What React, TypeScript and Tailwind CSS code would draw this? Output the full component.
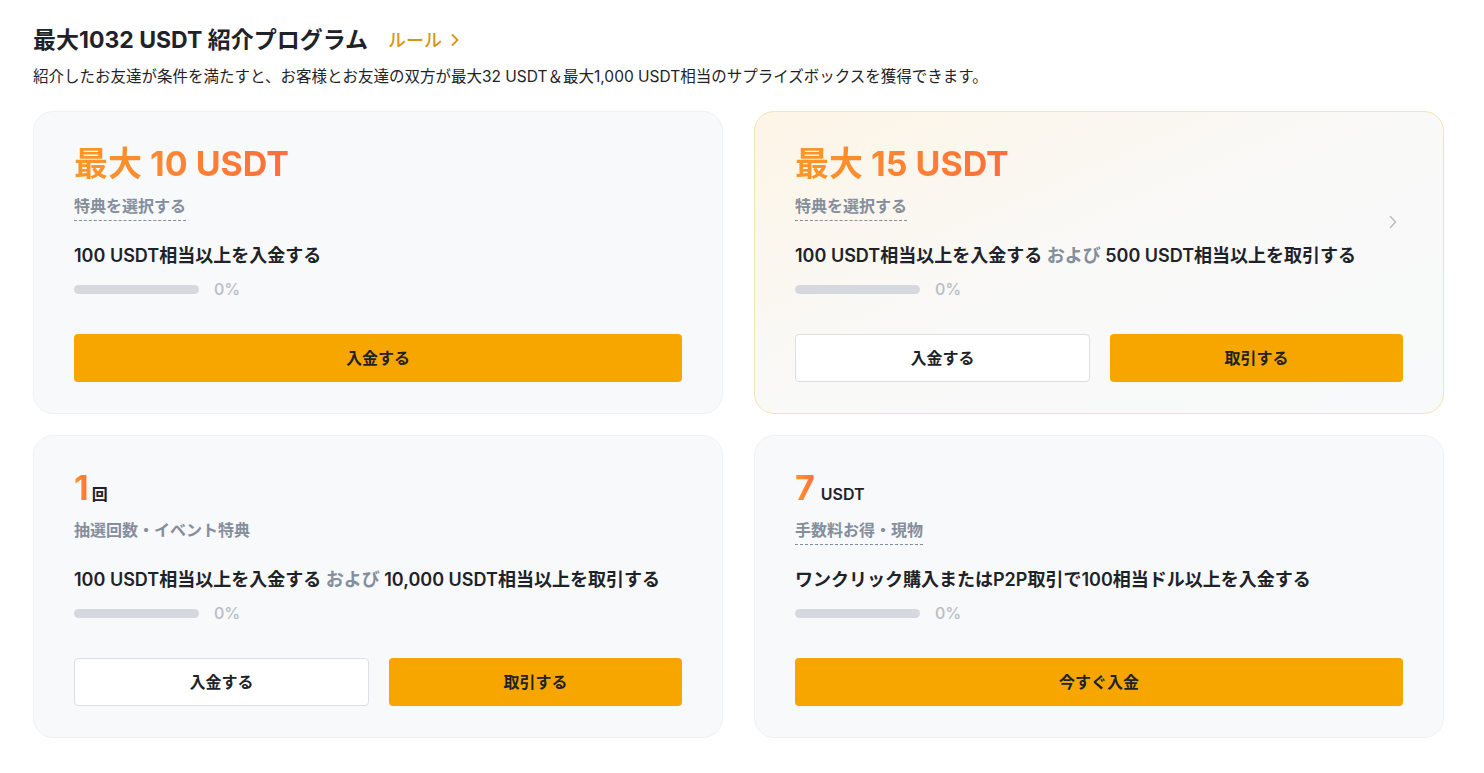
import React from "react";

const font = { fontFamily: 'Inter, "Noto Sans CJK JP", sans-serif' };

function Progress() {
  return (
    <div className="mt-[10px] flex h-[20px] items-center gap-[15px]">
      <div className="h-[9px] w-[125px] rounded-full bg-[#d5d9df]" />
      <span className="text-[16px] font-medium text-[#b7bdc6]">0%</span>
    </div>
  );
}

function Yellow({ children }: { children: React.ReactNode }) {
  return (
    <button className="flex h-[48px] flex-1 items-center justify-center rounded-[4px] bg-[#f7a600] text-[16px] font-bold text-[#1e2329]">
      {children}
    </button>
  );
}

function White({ children }: { children: React.ReactNode }) {
  return (
    <button className="flex h-[48px] flex-1 items-center justify-center rounded-[4px] border border-[#dcdfe4] bg-white text-[16px] font-bold text-[#1e2329]">
      {children}
    </button>
  );
}

function Heading({ children }: { children: React.ReactNode }) {
  return (
    <div className="h-[40px] text-[34px] font-bold leading-[40px]">
      <span className="bg-gradient-to-r from-[#fb9726] to-[#ff6d3b] bg-clip-text text-transparent">
        {children}
      </span>
    </div>
  );
}

function Sub({ children, dashed = true }: { children: React.ReactNode; dashed?: boolean }) {
  return (
    <div className="mt-[11px] flex h-[26px]">
      <span
        className={
          "h-[26px] text-[16px] font-semibold leading-[22px] text-[#848e9c] " +
          (dashed ? "border-b border-dashed border-[#848e9c]" : "")
        }
      >
        {children}
      </span>
    </div>
  );
}

function Cond({ children }: { children: React.ReactNode }) {
  return <div className="mt-[22px] text-[18px] font-semibold leading-[26px] text-[#1e2329]">{children}</div>;
}

const cardBase = "relative rounded-[20px] px-[40px] pt-[32px] pb-[31px]";

export default function App() {
  return (
    <div style={font} className="min-h-screen bg-white pl-[33px] pr-[40px] pt-[24px] text-[#1e2329]">
      <div className="flex items-center">
        <h1 className="text-[23px] font-bold leading-[32px]">最大1032 USDT 紹介プログラム</h1>
        <a className="ml-[20px] flex items-center gap-[8px] text-[18px] font-medium text-[#d89614]">
          ルール
          <svg width="10" height="14" viewBox="0 0 10 14" fill="none">
            <path d="M2.5 2l5 5-5 5" stroke="#d89614" strokeWidth="1.8" strokeLinecap="round" strokeLinejoin="round" />
          </svg>
        </a>
      </div>
      <p className="mt-[10px] text-[15.5px] leading-[22px] text-[#1e2329]">
        紹介したお友達が条件を満たすと、お客様とお友達の双方が最大32 USDT＆最大1,000 USDT相当のサプライズボックスを獲得できます。
      </p>

      <div className="mt-[23px] grid grid-cols-2 gap-x-[31px] gap-y-[21px]">
        <div className={cardBase + " border border-[#eff1f3] bg-[#f8f9fa]"}>
          <Heading>最大 10 USDT</Heading>
          <Sub>特典を選択する</Sub>
          <Cond>100 USDT相当以上を入金する</Cond>
          <Progress />
          <div className="mt-[35px] flex gap-[20px]">
            <Yellow>入金する</Yellow>
          </div>
        </div>

        <div className={cardBase + " border border-[#f5e3b8] bg-gradient-to-br from-[#fdf5e6] via-[#f9f9f8] to-[#f8f9fa]"}>
          <Heading>最大 15 USDT</Heading>
          <Sub>特典を選択する</Sub>
          <Cond>
            100 USDT相当以上を入金する <span className="text-[#848e9c]">および</span> 500 USDT相当以上を取引する
          </Cond>
          <Progress />
          <div className="mt-[35px] flex gap-[20px]">
            <White>入金する</White>
            <Yellow>取引する</Yellow>
          </div>
          <svg className="absolute right-[46px] top-[103px]" width="8" height="14" viewBox="0 0 8 14" fill="none">
            <path d="M1.5 1.5l5 5.5-5 5.5" stroke="#b7bdc6" strokeWidth="1.5" strokeLinecap="round" strokeLinejoin="round" />
          </svg>
        </div>

        <div className={cardBase + " border border-[#eff1f3] bg-[#f8f9fa]"}>
          <div className="flex h-[40px] items-end leading-[40px]">
            <span className="bg-gradient-to-r from-[#fb9726] to-[#ff6d3b] bg-clip-text text-[34px] font-bold text-transparent">1</span>
            <span className="mb-[-2px] ml-[3px] text-[16px] font-semibold leading-[32px]">回</span>
          </div>
          <Sub dashed={false}>抽選回数・イベント特典</Sub>
          <Cond>
            100 USDT相当以上を入金する <span className="text-[#848e9c]">および</span> 10,000 USDT相当以上を取引する
          </Cond>
          <Progress />
          <div className="mt-[35px] flex gap-[20px]">
            <White>入金する</White>
            <Yellow>取引する</Yellow>
          </div>
        </div>

        <div className={cardBase + " border border-[#eff1f3] bg-[#f8f9fa]"}>
          <div className="flex h-[40px] items-end leading-[40px]">
            <span className="bg-gradient-to-r from-[#fb9726] to-[#ff6d3b] bg-clip-text text-[34px] font-bold text-transparent">7</span>
            <span className="mb-[-2px] ml-[6px] text-[16px] font-semibold leading-[32px]">USDT</span>
          </div>
          <Sub>手数料お得・現物</Sub>
          <Cond>ワンクリック購入またはP2P取引で100相当ドル以上を入金する</Cond>
          <Progress />
          <div className="mt-[35px] flex gap-[20px]">
            <Yellow>今すぐ入金</Yellow>
          </div>
        </div>
      </div>
    </div>
  );
}
